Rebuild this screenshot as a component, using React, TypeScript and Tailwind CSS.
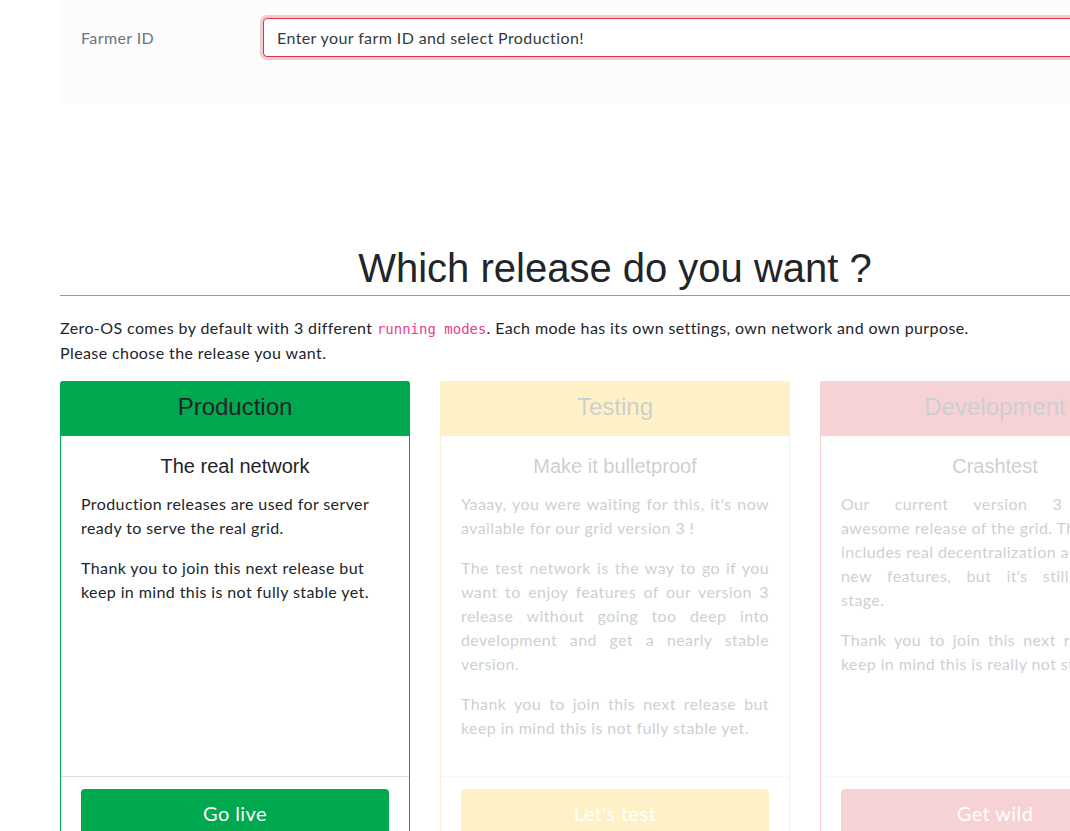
import React from "react";

const body = { fontFamily: "Lato, 'Noto Sans', sans-serif", letterSpacing: "0.4px" };
const head = { fontFamily: "'Liberation Sans', Arial, sans-serif", letterSpacing: "0px" };

type CardProps = {
  title: string;
  subtitle: string;
  paras: React.ReactNode[];
  button: string;
  headerBg: string;
  border: string;
  btnBg: string;
  justify?: boolean;
  faded?: boolean;
};

function Card({ title, subtitle, paras, button, headerBg, border, btnBg, justify, faded }: CardProps) {
  return (
    <div className={`flex flex-col w-[350px] shrink-0 rounded-t-[4px] border ${border} ${faded ? "opacity-[0.22]" : ""}`}>
      <div className={`h-[55px] pb-[3px] flex items-center justify-center rounded-t-[3px] ${headerBg} -mx-px -mt-px`}>
        <span style={head} className="text-[24px] text-[#212529]">{title}</span>
      </div>
      <div className="flex-1 px-[20px] pt-[18px] pb-[20px]">
        <h5 style={head} className="text-[20px] leading-[24px] text-center text-[#212529] mb-[14px]">{subtitle}</h5>
        {paras.map((p, i) => (
          <p key={i} style={body} className={`text-[16px] leading-[24px] text-[#212529] mb-[16px] ${justify ? "text-justify" : ""}`}>
            {p}
          </p>
        ))}
      </div>
      <div className="border-t border-[#dddddd] px-[20px] pt-[12px] pb-[12px]">
        <div className={`h-[48px] rounded-[4px] flex items-center justify-center ${btnBg}`}>
          <span style={body} className="text-[20px] text-white">{button}</span>
        </div>
      </div>
    </div>
  );
}

function JLine({ children, j }: { children: React.ReactNode; j?: boolean }) {
  return <span className={`block ${j ? "[text-align-last:justify]" : "[text-align-last:left]"}`}>{children}</span>;
}

export default function App() {
  return (
    <div className="w-[1200px] bg-white pl-[60px] pb-[40px]" style={body}>
      <div className="w-[1110px]">
        <div className="bg-[#fcfcfc] h-[104px] pt-[18px] pl-[21px] flex">
          <div className="w-[182px] h-[39px] flex items-center text-[16px] text-[#6c757d]">Farmer ID</div>
          <div className="flex-1 h-[39px] rounded-[4px] border border-[#dc3545] shadow-[0_0_0_3px_rgba(220,53,69,0.25)] bg-white flex items-center px-[13px] text-[16px] text-[#343a40]">
            Enter your farm ID and select Production!
          </div>
        </div>

        <h1 style={head} className="mt-[140px] text-[40px] leading-[48px] text-center text-[#212529]">
          Which release do you want ?
        </h1>
        <hr className="mt-[3px] border-0 border-t border-[#9a9a9a]" />

        <p className="mt-[20px] text-[16px] leading-[24px] text-[#212529]">
          Zero-OS comes by default with 3 different{" "}
          <code style={{ fontFamily: "'DejaVu Sans Mono', monospace", letterSpacing: "0px" }} className="text-[14px] text-[#e83e8c]">running modes</code>. Each mode has its own settings, own network and own purpose.
          <br />
          Please choose the release you want.
        </p>

        <div className="mt-[16px] flex gap-[30px] items-stretch">
          <Card
            title="Production"
            subtitle="The real network"
            paras={[
              "Production releases are used for server ready to serve the real grid.",
              "Thank you to join this next release but keep in mind this is not fully stable yet.",
            ]}
            button="Go live"
            headerBg="bg-[#00a84f]"
            border="border-[#00a84f]"
            btnBg="bg-[#00a84f]"
          />
          <Card
            title="Testing"
            subtitle="Make it bulletproof"
            paras={[
              "Yaaay, you were waiting for this, it's now available for our grid version 3 !",
              "The test network is the way to go if you want to enjoy features of our version 3 release without going too deep into development and get a nearly stable version.",
              "Thank you to join this next release but keep in mind this is not fully stable yet.",
            ]}
            button="Let's test"
            headerBg="bg-[#ffc107]"
            border="border-[#ffc107]"
            btnBg="bg-[#ffc107]"
            justify
            faded
          />
          <Card
            title="Development"
            subtitle="Crashtest"
            paras={[
              <>
                <JLine j>Our current version 3 is the</JLine>
                <JLine>awesome release of the grid. This</JLine>
                <JLine>includes real decentralization and</JLine>
                <JLine j>new features, but it's still in early</JLine>
                <JLine>stage.</JLine>
              </>,
              "Thank you to join this next release but keep in mind this is really not stable yet.",
            ]}
            button="Get wild"
            headerBg="bg-[#dc3545]"
            border="border-[#dc3545]"
            btnBg="bg-[#dc3545]"
            justify
            faded
          />
        </div>
      </div>
    </div>
  );
}
